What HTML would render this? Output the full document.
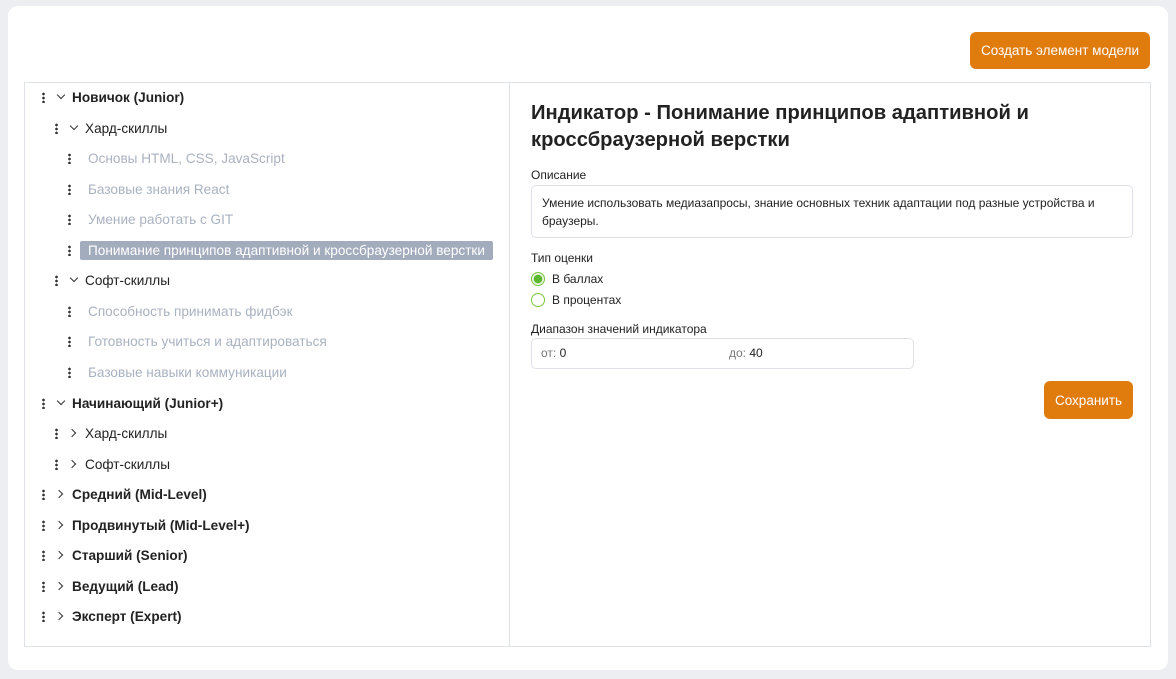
<!DOCTYPE html>
<html><head><meta charset="utf-8"><style>
*{box-sizing:border-box;margin:0;padding:0}
body{width:1176px;height:679px;background:#eceef1;font-family:"Liberation Sans",sans-serif;position:relative;overflow:hidden}
.card{position:absolute;left:8px;top:6px;width:1160px;height:664px;background:#fff;border-radius:10px}
.btn{position:absolute;background:#e07b0e;color:#fff;border-radius:6px;font-size:13.5px;display:flex;align-items:center;justify-content:center}
.panel{position:absolute;left:24px;top:82px;width:1127px;height:565px;border:1px solid #dfe2e6}
.div{position:absolute;left:509px;top:82px;width:1px;height:565px;background:#dfe2e6}
.row{position:absolute;height:20px;display:flex;align-items:center;font-size:13.6px;color:#222;white-space:nowrap}
.dots{position:absolute;width:3px;height:11px;top:50%;margin-top:-5px;background:radial-gradient(circle,#333 1.2px,transparent 1.5px) 0 0/3px 4px repeat-y}
.chev{position:absolute;top:50%;width:6px;height:6px;border-right:1.3px solid #333;border-bottom:1.3px solid #333}
.down{margin-top:-5px;transform:rotate(45deg)}
.right{margin-top:-3px;transform:rotate(-45deg)}
.b{font-weight:bold}
.g{color:#a9b2c0}
.sel{background:#a3acbd;color:#fff;padding:2px 8px;border-radius:2px}
.lbl{position:absolute;left:531px;font-size:12px;color:#222}
.box{position:absolute;border:1px solid #dfe2e6;border-radius:5px}
.radio{position:absolute;left:531px;width:14px;height:14px;border-radius:50%;border:1.5px solid #7cc63f}
</style></head><body>
<div class="card"></div>
<div class="btn" style="left:970px;top:32px;width:180px;height:37px">Создать элемент модели</div>
<div class="panel"></div><div class="div"></div>

<div class="row b" style="top:87px;left:72px">Новичок (Junior)</div>
<div class="dots" style="left:42px;top:97px"></div><div class="chev down" style="left:58px;top:97px"></div>

<div class="row" style="top:118px;left:85px">Хард-скиллы</div>
<div class="dots" style="left:55px;top:128px"></div><div class="chev down" style="left:71px;top:128px"></div>

<div class="row g" style="top:148px;left:88px">Основы HTML, CSS, JavaScript</div><div class="dots" style="left:68px;top:158px"></div>
<div class="row g" style="top:179px;left:88px">Базовые знания React</div><div class="dots" style="left:68px;top:189px"></div>
<div class="row g" style="top:209px;left:88px">Умение работать с GIT</div><div class="dots" style="left:68px;top:219px"></div>
<div class="row" style="top:240px;left:80px"><span class="sel">Понимание принципов адаптивной и кроссбраузерной верстки</span></div><div class="dots" style="left:68px;top:250px"></div>

<div class="row" style="top:270px;left:85px">Софт-скиллы</div>
<div class="dots" style="left:55px;top:280px"></div><div class="chev down" style="left:71px;top:280px"></div>
<div class="row g" style="top:301px;left:88px">Способность принимать фидбэк</div><div class="dots" style="left:68px;top:311px"></div>
<div class="row g" style="top:331px;left:88px">Готовность учиться и адаптироваться</div><div class="dots" style="left:68px;top:341px"></div>
<div class="row g" style="top:362px;left:88px">Базовые навыки коммуникации</div><div class="dots" style="left:68px;top:372px"></div>

<div class="row b" style="top:393px;left:72px">Начинающий (Junior+)</div>
<div class="dots" style="left:42px;top:403px"></div><div class="chev down" style="left:58px;top:403px"></div>
<div class="row" style="top:423px;left:85px">Хард-скиллы</div>
<div class="dots" style="left:55px;top:433px"></div><div class="chev right" style="left:69px;top:433px"></div>
<div class="row" style="top:454px;left:85px">Софт-скиллы</div>
<div class="dots" style="left:55px;top:464px"></div><div class="chev right" style="left:69px;top:464px"></div>

<div class="row b" style="top:484px;left:72px">Средний (Mid-Level)</div>
<div class="dots" style="left:42px;top:494px"></div><div class="chev right" style="left:56px;top:494px"></div>
<div class="row b" style="top:515px;left:72px">Продвинутый (Mid-Level+)</div>
<div class="dots" style="left:42px;top:525px"></div><div class="chev right" style="left:56px;top:525px"></div>
<div class="row b" style="top:545px;left:72px">Старший (Senior)</div>
<div class="dots" style="left:42px;top:555px"></div><div class="chev right" style="left:56px;top:555px"></div>
<div class="row b" style="top:576px;left:72px">Ведущий (Lead)</div>
<div class="dots" style="left:42px;top:586px"></div><div class="chev right" style="left:56px;top:586px"></div>
<div class="row b" style="top:606px;left:72px">Эксперт (Expert)</div>
<div class="dots" style="left:42px;top:616px"></div><div class="chev right" style="left:56px;top:616px"></div>

<div style="position:absolute;left:531px;top:100px;width:580px;font-size:20.2px;font-weight:bold;line-height:27px;color:#222">Индикатор - Понимание принципов адаптивной и кроссбраузерной верстки</div>
<div class="lbl" style="top:168px">Описание</div>
<div class="box" style="left:531px;top:185px;width:602px;height:53px;padding:8px 10px;font-size:12px;line-height:18px;color:#222">Умение использовать медиазапросы, знание основных техник адаптации под разные устройства и браузеры.</div>
<div class="lbl" style="top:251px">Тип оценки</div>
<div class="radio" style="top:272px;background:radial-gradient(circle,#5cb82e 4px,#e9f5e1 4.5px)"></div>
<div class="lbl" style="top:272px;left:552px">В баллах</div>
<div class="radio" style="top:293px"></div>
<div class="lbl" style="top:293px;left:552px">В процентах</div>
<div class="lbl" style="top:322px">Диапазон значений индикатора</div>
<div class="box" style="left:531px;top:338px;width:383px;height:31px"></div>
<div class="lbl" style="top:346px;left:541px"><span style="color:#777">от:</span> 0</div>
<div class="lbl" style="top:346px;left:729px"><span style="color:#777">до:</span> 40</div>
<div class="btn" style="left:1044px;top:381px;width:89px;height:38px">Сохранить</div>
</body></html>
